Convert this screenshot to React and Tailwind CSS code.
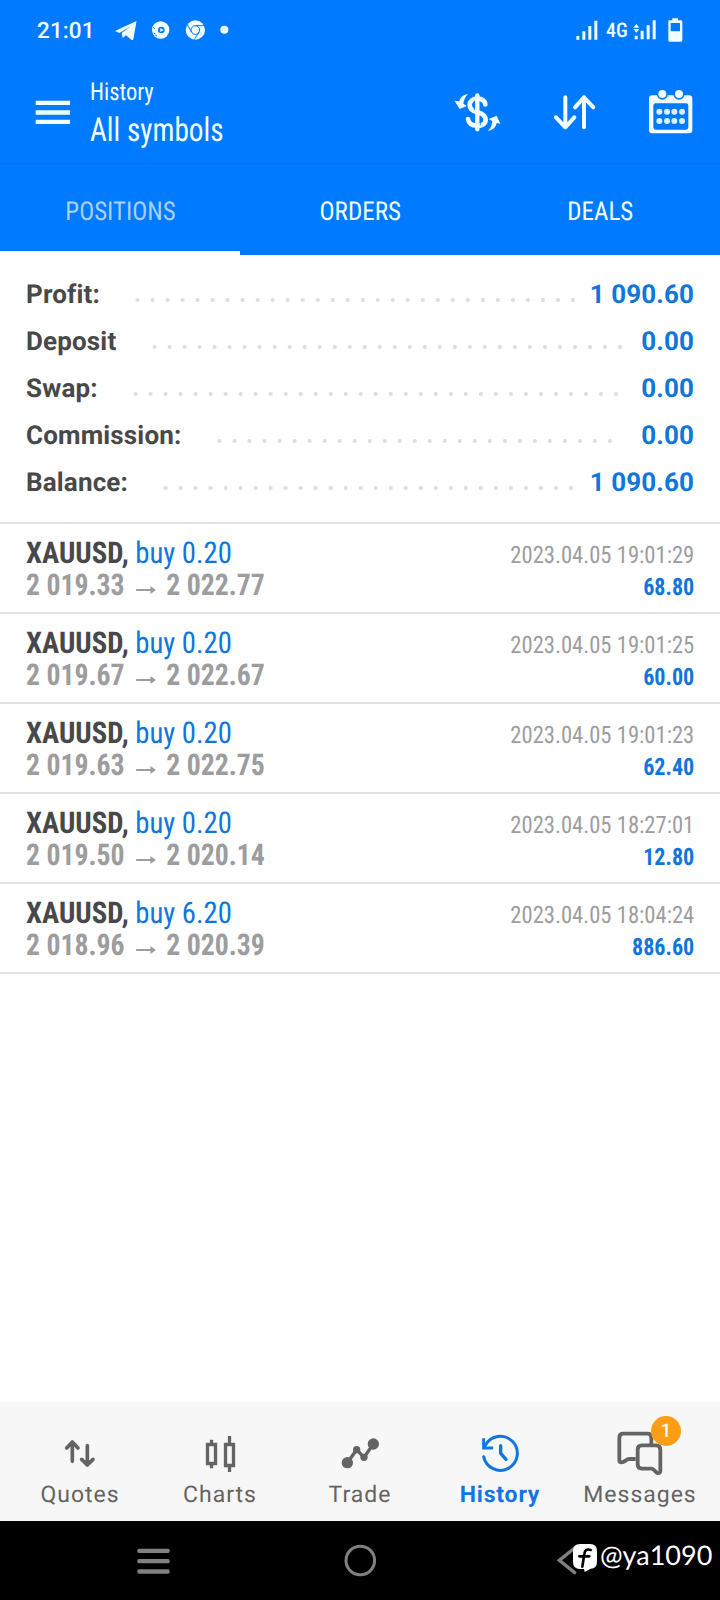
const condensed = "font-['Roboto_Condensed','Roboto',sans-serif] [font-stretch:75%]";

const summary = [
  { label: "Profit:", value: "1 090.60", lead: "w-[104px]", dots: "w-[450.9px]" },
  { label: "Deposit", value: "0.00", lead: "w-[121px]", dots: "w-[481px]" },
  { label: "Swap:", value: "0.00", lead: "w-[102px]", dots: "w-[496px]" },
  { label: "Commission:", value: "0.00", lead: "w-[186px]", dots: "w-[405.8px]" },
  { label: "Balance:", value: "1 090.60", lead: "w-[132px]", dots: "w-[420.8px]" },
];

const deals = [
  { volume: "0.20", open: "2 019.33", close: "2 022.77", time: "2023.04.05 19:01:29", profit: "68.80" },
  { volume: "0.20", open: "2 019.67", close: "2 022.67", time: "2023.04.05 19:01:25", profit: "60.00" },
  { volume: "0.20", open: "2 019.63", close: "2 022.75", time: "2023.04.05 19:01:23", profit: "62.40" },
  { volume: "0.20", open: "2 019.50", close: "2 020.14", time: "2023.04.05 18:27:01", profit: "12.80" },
  { volume: "6.20", open: "2 018.96", close: "2 020.39", time: "2023.04.05 18:04:24", profit: "886.60" },
];

function StatusBar() {
  return (
    <div className="flex h-[60px] items-center pl-[37px]">
      <span className="w-[77px] pt-[2px] text-[22.500px] leading-[30px] font-medium tracking-[0.1px]">21:01</span>
      <svg className="h-5 w-[118px]" viewBox="342 58 354 60" fill="currentColor">
        <path d="M345 91L408 62C409 61 410 63 409 65L400 116C399 119 396 119 394 117L378 104L368 112L365 97L393 76L358 97Z" />
        <circle cx="482" cy="88" r="26" />
        <circle cx="484" cy="88" r="10" fill="#007aff" />
        <path d="M481 82L491 88L481 94Z" />
        <path d="M460 80L464 84M461 97L466 100M466 104L471 106" stroke="#007aff" strokeWidth="3" />
        <circle cx="586" cy="88" r="29" />
        <g fill="none" stroke="#007aff" strokeWidth="3">
          <circle cx="586" cy="88" r="13" />
          <path d="M586 75H614M574.500 94L561 70M597.500 94L583 117" />
        </g>
        <circle cx="673" cy="87" r="12" />
      </svg>
      <div className="ml-auto flex items-center pr-[37px]">
        <svg className="h-5 w-[22px]" viewBox="650 58 66 60" fill="currentColor">
          <path d="M651 106h9v11h-9zM669 92h9v25h-9zM687 76h9v41h-9zM705 60h9v57h-9z" />
        </svg>
        <span className={`${condensed} ml-2 w-[27px] text-[20px] leading-[30px] font-medium`}>4G</span>
        <svg className="h-6 w-[50px]" viewBox="820 53 150 72" fill="currentColor">
          <path d="M830 71L839 82H821ZM821 86H839L830 97Z" />
          <path d="M825 106h9v11h-9zM843 91h9v26h-9zM861 75h9v42h-9zM879 60h9v57h-9z" />
          <path fillRule="evenodd" d="M938 54H955V60H964Q968 60 968 64V120Q968 124 964 124H930Q926 124 926 120V64Q926 60 930 60H938ZM933 68V93H961V68Z" />
        </svg>
      </div>
    </div>
  );
}

function AppBar() {
  return (
    <div className="flex h-[104px] border-b border-[#0075f3]">
      <svg className="mt-10 ml-[35px] h-[26px] w-9" viewBox="105 300 108 78" fill="currentColor">
        <path d="M107 302h103v13H107zM107 331h103v13H107zM107 359h103v13H107z" />
      </svg>
      <div className={`${condensed} ml-[19px] pt-[17px] font-[450]`}>
        <div className="origin-left scale-x-[0.92] text-[24.500px] leading-[30px]">History</div>
        <div className="origin-left scale-x-[0.885] pt-[4px] text-[33px] leading-[40px]">All symbols</div>
      </div>
      <div className="ml-auto flex pt-7 pr-[26px]">
        <svg className="h-[46px] w-[48px]" viewBox="282 264 144 138" fill="none" stroke="currentColor">
          <path d="M352 286V388" strokeWidth="13" strokeLinecap="round" />
          <path d="M376 313C374 301 365 296 352 296C338 296 329 304 329 315C329 327 338 333 352 337C367 341 377 347 377 360C377 371 367 377 352 377C336 377 326 371 324 357" strokeWidth="14" strokeLinecap="round" />
          <path d="M343 302V330M361 348V376" stroke="#007aff" strokeWidth="2.500" />
          <path d="M324 282C313 283 301 290 298 304L284 303L299 327L320 318L310 311C312 298 316 290 324 282Z" fill="currentColor" stroke="none" />
          <path d="M383 392C396 392 407 384 410 369L421 371L410 347L386 357L397 363C396 376 392 386 383 392Z" fill="currentColor" stroke="none" />
        </svg>
        <svg className="ml-[50px] h-[46px] w-[46px]" viewBox="576 264 138 138" fill="none" stroke="currentColor" strokeWidth="12" strokeLinecap="round" strokeLinejoin="round">
          <path d="M616 292V382M588 352L616 382L643 352M672 382V292M645 322L672 292L700 322" />
        </svg>
        <svg className="ml-[50px] h-[46px] w-[46px]" viewBox="864 264 138 138" fill="currentColor">
          <path fillRule="evenodd" d="M877 286H987Q997 286 997 296V390Q997 400 987 400H877Q867 400 867 390V296Q867 286 877 286ZM887 310Q880 310 880 317V382Q880 389 887 389H978Q985 389 985 382V317Q985 310 978 310Z" />
          <g stroke="#007aff" strokeWidth="5">
            <circle cx="907" cy="282" r="14.500" />
            <circle cx="957" cy="282" r="14.500" />
          </g>
          <g opacity="0.9">
            <circle cx="898" cy="335" r="9" /><circle cx="921" cy="335" r="9" /><circle cx="943" cy="335" r="9" /><circle cx="966" cy="335" r="9" />
            <circle cx="898" cy="363" r="9" /><circle cx="921" cy="363" r="9" /><circle cx="943" cy="363" r="9" /><circle cx="966" cy="363" r="9" />
          </g>
        </svg>
      </div>
    </div>
  );
}

function Tabs() {
  return (
    <div className={`${condensed} grid h-[91px] grid-cols-3 grid-rows-[91px] text-center text-[26px] leading-[96px] font-[450]`}>
      <div className="border-b-4 border-white text-[#a9d0fb]">
        <span className="inline-block scale-x-[0.96]">POSITIONS</span>
      </div>
      <div>
        <span className="inline-block scale-x-[0.965]">ORDERS</span>
      </div>
      <div>
        <span className="inline-block scale-x-[0.96]">DEALS</span>
      </div>
    </div>
  );
}

function Summary() {
  return (
    <div className="h-[269px] border-b-2 border-[#e2e2e2] px-[26px] pt-[17px] text-[26px] font-bold">
      {summary.map((row) => (
        <div key={row.label} className="flex h-[47px] items-center leading-[47px]">
          <span className={`${row.lead} shrink-0 tracking-[0.15px] text-[#48484a]`}>{row.label}</span>
          <span className={`${row.dots} mt-[8px] h-[6px] shrink-0 bg-[radial-gradient(circle,#dedede_1.6px,transparent_2.4px)] bg-[length:15.03px_6px]`} />
          <span className="ml-auto whitespace-nowrap tracking-[0.1px] text-[#0f76db]">{row.value}</span>
        </div>
      ))}
    </div>
  );
}

function Deal({ deal }) {
  return (
    <div className={`${condensed} flex h-[90px] justify-between border-b-2 border-[#e2e2e2] px-[26px] pt-[14px]`}>
      <div className="text-[30px] leading-[32px] whitespace-nowrap">
        <div className="origin-left scale-x-[0.956]">
          <span className="font-bold text-[#48484a]">XAUUSD,</span> <span className="text-[#0f76db]">buy {deal.volume}</span>
        </div>
        <div className="flex origin-left scale-x-[0.925] items-center font-bold text-[#9d9da0]">
          <span>{deal.open}</span>
          <svg className="mt-[7px] mr-[11px] ml-[12px] h-3 w-[22px]" viewBox="0 0 22 12" fill="none" stroke="currentColor" strokeWidth="1.800">
            <path d="M0 6H19" />
            <path d="M15.500 2L21.500 6L15.500 10Z" fill="currentColor" stroke="none" />
          </svg>
          <span>{deal.close}</span>
        </div>
      </div>
      <div className="pt-px text-right text-[24px] leading-[32px]">
        <div className="origin-right scale-x-[0.942] text-[#9d9da0]">{deal.time}</div>
        <div className="origin-right scale-x-[0.92] font-bold text-[#0f76db]">{deal.profit}</div>
      </div>
    </div>
  );
}

function QuotesIcon() {
  return (
    <svg className="h-12 w-12" viewBox="170 120 144 144" fill="none" stroke="currentColor" strokeWidth="11" strokeLinecap="round" strokeLinejoin="round">
      <path d="M219 214V156M202 174L219 156L236 174M264 167V225M247 208L264 225L281 208" />
    </svg>
  );
}

function ChartsIcon() {
  return (
    <svg className="h-12 w-12" viewBox="588 120 144 144" fill="none" stroke="currentColor" strokeWidth="10">
      <path d="M622.500 163.500H646.500V220.500H622.500ZM676.500 163.500H700.500V226.500H676.500Z" />
      <path d="M634.500 149V160M634.500 224V235M688.500 138V160M688.500 230V246" />
    </svg>
  );
}

function TradeIcon() {
  return (
    <svg className="h-12 w-12" viewBox="1008 120 144 144" fill="none" stroke="currentColor" strokeWidth="10">
      <path d="M1042 218L1070 179L1092 202L1120 162" />
      <g fill="currentColor" stroke="none">
        <circle cx="1042" cy="218" r="17" />
        <circle cx="1070" cy="179" r="11" />
        <circle cx="1092" cy="202" r="11" />
        <circle cx="1120" cy="162" r="17" />
      </g>
    </svg>
  );
}

function HistoryIcon() {
  return (
    <svg className="h-12 w-12" viewBox="348 120 144 144" fill="none" stroke="currentColor" strokeWidth="9" strokeLinecap="round" strokeLinejoin="round">
      <path d="M371 200A51 51 0 1 0 376 166" />
      <path d="M371 149V174H395" strokeLinecap="square" strokeLinejoin="miter" />
      <path d="M422 167V190L438 208" strokeWidth="10" />
    </svg>
  );
}

function MessagesIcon() {
  return (
    <span className="relative block h-12 w-12">
      <svg className="h-12 w-12" viewBox="767 120 144 144" fill="none" stroke="currentColor" strokeWidth="11.500" strokeLinejoin="round">
        <path d="M826 207H806C798 207 793 217 784 217Q777 217 777 209V143Q777 131 789 131H861Q873 131 873 143V165" />
        <path d="M845 166H887Q900 166 900 179V242Q900 250 892 249C882 247 883 236 873 236H845Q832 236 832 223V179Q832 166 845 166Z" />
      </svg>
      <span className="absolute -top-[14px] left-[35px] flex h-[30px] w-[30px] items-center justify-center rounded-full bg-[#ff9d14] text-[19px] font-medium text-white">
        1
      </span>
    </span>
  );
}

const nav = [
  { label: "Quotes", icon: QuotesIcon },
  { label: "Charts", icon: ChartsIcon },
  { label: "Trade", icon: TradeIcon },
  { label: "History", icon: HistoryIcon, active: true },
  { label: "Messages", icon: MessagesIcon },
];

function BottomNav() {
  return (
    <nav className="mt-auto grid h-[119px] grid-cols-5 bg-[#f7f7f7] px-[10px] pt-[28px]">
      {nav.map(({ label, icon: Icon, active }) => (
        <div key={label} className={active ? "flex flex-col items-center font-bold text-[#0f76e4]" : "flex flex-col items-center text-[#646464]"}>
          <Icon />
          <span className={active ? "text-[23px] leading-[34px] tracking-[0.8px]" : "text-[23px] leading-[34px] tracking-[1px]"}>{label}</span>
        </div>
      ))}
    </nav>
  );
}

function SystemBar() {
  return (
    <div className="flex h-[79px] bg-black text-[#808080]">
      <svg className="mt-6 ml-[136px] h-8 w-[34px]" viewBox="408 465 102 96" fill="currentColor">
        <rect x="412" y="476" width="97" height="13" rx="5" /><rect x="412" y="507" width="97" height="13" rx="5" /><rect x="412" y="538" width="97" height="13" rx="5" />
      </svg>
      <svg className="mt-[22px] ml-[172px] h-9 w-9" viewBox="0 0 36 36" fill="none" stroke="currentColor" strokeWidth="3">
        <circle cx="18.300" cy="17.500" r="14.300" />
      </svg>
      <svg className="mt-[21px] ml-[178px] h-9 w-[44px]" viewBox="588 456 132 108" fill="none">
        <path d="M644 474L598 511L644 548" stroke="currentColor" strokeWidth="10" strokeLinecap="round" />
        <path d="M660 462H690Q711 462 711 483V515Q711 535 692 536L674 546L672 537H660Q639 537 639 516V483Q639 462 660 462Z" fill="#fff" />
        <path d="M692 480Q675 474 673 492L667 530M658 499H688" stroke="#000" strokeWidth="8" strokeLinecap="round" />
      </svg>
      <span className="mt-[15px] text-[27px] leading-[38px] whitespace-nowrap text-white font-['Lato',sans-serif]">@ya1090</span>
    </div>
  );
}

export default function App() {
  return (
    <main className="flex h-[1600px] w-[720px] flex-col overflow-hidden bg-white font-['Roboto',sans-serif] [text-rendering:geometricPrecision]">
      <header className="h-[255px] bg-[#007aff] text-[#f2ffff]">
        <StatusBar />
        <AppBar />
        <Tabs />
      </header>
      <Summary />
      {deals.map((deal) => (
        <Deal key={deal.time} deal={deal} />
      ))}
      <BottomNav />
      <SystemBar />
    </main>
  );
}
